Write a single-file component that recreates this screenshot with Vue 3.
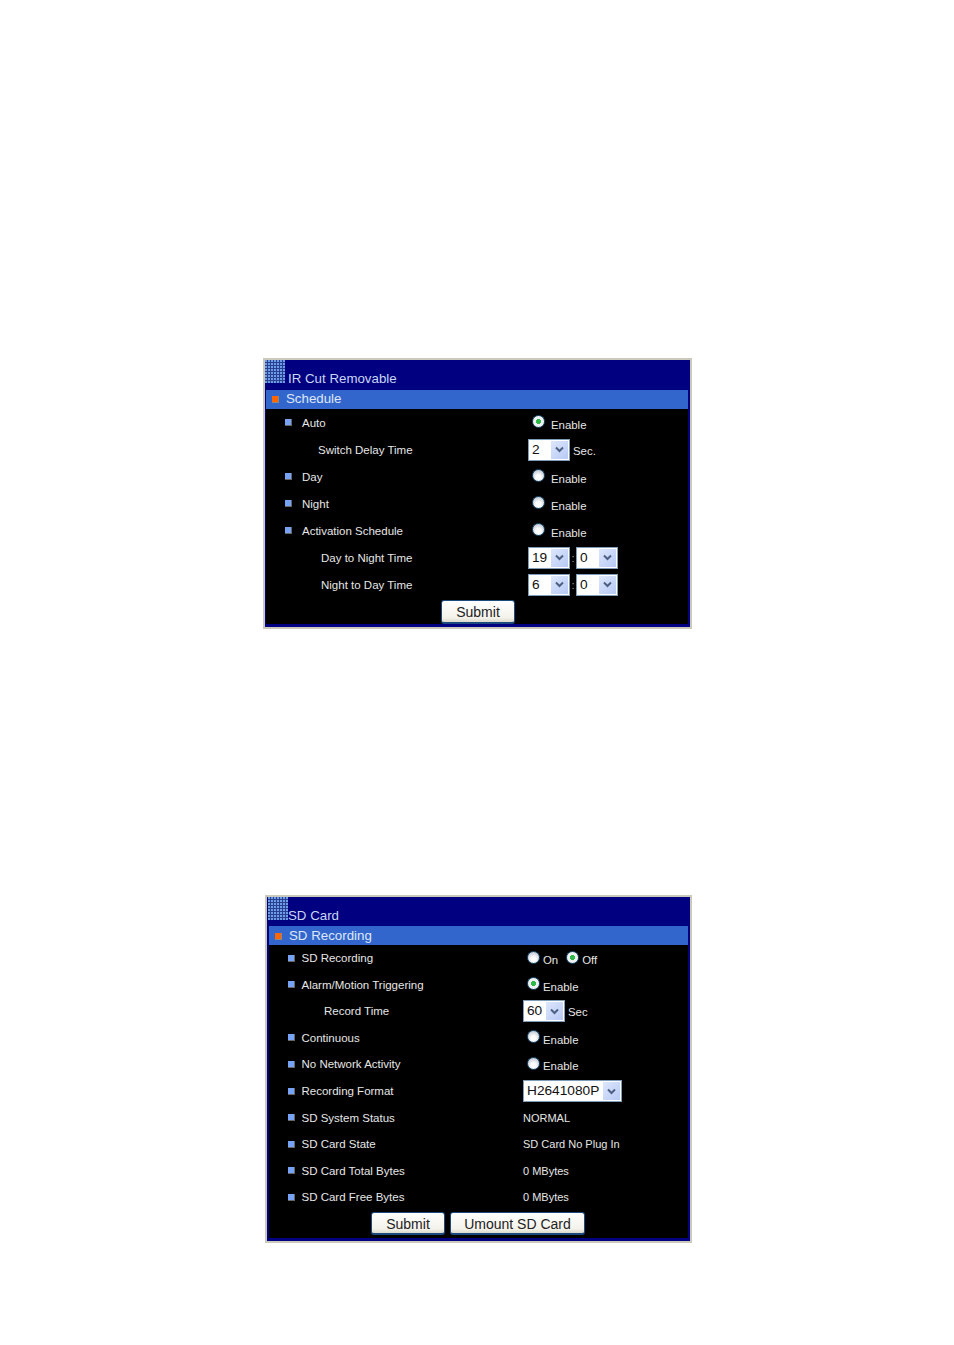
<script setup>
const panels = [
  {
    key: 'ir',
    title: 'IR Cut Removable',
    section: 'Schedule',
    buttons: [{ label: 'Submit', width: 74 }],
    rows: [
      { label: 'Auto', bullet: true, radios: [{ text: 'Enable', on: true }] },
      { label: 'Switch Delay Time', indent: 'sub-a', selects: [{ value: '2', width: 42 }], suffix: 'Sec.' },
      { label: 'Day', bullet: true, radios: [{ text: 'Enable' }] },
      { label: 'Night', bullet: true, radios: [{ text: 'Enable' }] },
      { label: 'Activation Schedule', bullet: true, radios: [{ text: 'Enable' }] },
      { label: 'Day to Night Time', indent: 'sub-b', selects: [{ value: '19', width: 42 }, { value: '0', width: 42 }] },
      { label: 'Night to Day Time', indent: 'sub-b', selects: [{ value: '6', width: 42 }, { value: '0', width: 42 }] }
    ]
  },
  {
    key: 'sd',
    title: 'SD Card',
    section: 'SD Recording',
    buttons: [{ label: 'Submit', width: 74 }, { label: 'Umount SD Card', width: 135 }],
    rows: [
      { label: 'SD Recording', bullet: true, radios: [{ text: 'On' }, { text: 'Off', on: true }] },
      { label: 'Alarm/Motion Triggering', bullet: true, radios: [{ text: 'Enable', on: true }] },
      { label: 'Record Time', indent: 'sub-c', selects: [{ value: '60', width: 42 }], suffix: 'Sec' },
      { label: 'Continuous', bullet: true, radios: [{ text: 'Enable' }] },
      { label: 'No Network Activity', bullet: true, radios: [{ text: 'Enable' }] },
      { label: 'Recording Format', bullet: true, selects: [{ value: 'H2641080P', width: 99 }] },
      { label: 'SD System Status', bullet: true, value: 'NORMAL' },
      { label: 'SD Card State', bullet: true, value: 'SD Card No Plug In' },
      { label: 'SD Card Total Bytes', bullet: true, value: '0 MBytes' },
      { label: 'SD Card Free Bytes', bullet: true, value: '0 MBytes' }
    ]
  }
]
</script>

<template>
  <div class="page">
    <div v-for="panel in panels" :key="panel.key" class="panel" :class="'panel-' + panel.key">
      <div class="title-bar">
        <span class="dots" />
        <span class="title">{{ panel.title }}</span>
      </div>
      <div class="section-bar">
        <span class="section-mark" />
        <span>{{ panel.section }}</span>
      </div>

      <div v-for="row in panel.rows" :key="row.label" class="row">
        <div class="label" :class="row.indent">
          <span v-if="row.bullet" class="bullet" />
          <span>{{ row.label }}</span>
        </div>
        <div class="control">
          <template v-if="row.radios">
            <label v-for="radio in row.radios" :key="radio.text" class="radio-item">
              <span class="radio" :class="{ on: radio.on }" />
              <span class="radio-text">{{ radio.text }}</span>
            </label>
          </template>
          <template v-if="row.selects">
            <template v-for="(sel, i) in row.selects" :key="i">
              <span v-if="i > 0" class="colon">:</span>
              <div class="select" :style="{ width: sel.width + 'px' }">
                <span class="select-value">{{ sel.value }}</span>
                <span class="select-arrow">
                  <svg width="9" height="7" viewBox="0 0 9 7">
                    <path d="M1 1.5 L4.5 5 L8 1.5" fill="none" stroke="#4d6185" stroke-width="2" />
                  </svg>
                </span>
              </div>
            </template>
          </template>
          <span v-if="row.suffix" class="suffix">{{ row.suffix }}</span>
          <span v-if="row.value" class="value">{{ row.value }}</span>
        </div>
      </div>

      <div class="actions">
        <button v-for="b in panel.buttons" :key="b.label" class="btn" type="button" :style="{ width: b.width + 'px' }">
          {{ b.label }}
        </button>
      </div>
    </div>
  </div>
</template>

<style>
html, body {
  background: #fff;
}
</style>

<style scoped>
.page {
  height: 1345px;
  box-sizing: border-box;
  padding-top: 360px;
  display: flex;
  flex-direction: column;
  gap: 270px;
  font-family: 'Liberation Sans', Arial, sans-serif;
}

.panel {
  box-sizing: border-box;
  background: #000;
  border: 3px solid #000080;
  border-top: 0;
  border-right-width: 2px;
  box-shadow: 0 0 0 2px #cbc8bc;
  --row-h: 27px;
  --col: 262px;
}

.panel-ir {
  margin-left: 265px;
  width: 425px;
  height: 267px;
  border-left-width: 1px;
}

.panel-sd {
  margin-left: 267px;
  width: 423px;
  height: 344px;
  border-left-width: 2px;
  --row-h: 26.55px;
  --col: 254px;
}

.title-bar {
  height: 30px;
  background: #000080;
  display: flex;
  align-items: flex-end;
}

.panel-sd .title-bar {
  height: 29px;
}

.dots {
  width: 20px;
  height: 23px;
  align-self: flex-start;
  margin-left: -1px;
  flex: none;
  background-color: #27408f;
  background-image: radial-gradient(circle at 1px 1px, #6f9be8 1px, transparent 1.2px);
  background-size: 3px 3px;
}

.title {
  font-size: 13.3px;
  line-height: 18px;
  margin-left: 3px;
  margin-bottom: 2px;
  color: #c9d6f2;
}

.panel-sd .title {
  margin-left: 0;
  margin-bottom: 1px;
}

.section-bar {
  box-sizing: border-box;
  height: 19px;
  padding: 0 0 2px 6px;
  background: #3366cc;
  color: #dfe7f8;
  font-size: 13.3px;
  display: flex;
  align-items: center;
}

.panel-sd .section-bar {
  padding-bottom: 1px;
}

.section-mark {
  box-sizing: border-box;
  width: 7px;
  height: 7px;
  margin-top: 2px;
  margin-right: 7px;
  background: #ff6600;
  border-right: 1px solid #8f8a80;
  border-bottom: 1px solid #8f8a80;
  flex: none;
}

.row {
  height: var(--row-h);
  display: grid;
  grid-template-columns: var(--col) 1fr;
  align-items: center;
}

.label {
  display: flex;
  align-items: center;
  font-size: 11.5px;
  color: #e6e6e6;
  padding-left: 19px;
}

.bullet {
  width: 7px;
  height: 7px;
  margin-right: 10px;
  background: #77a3f7;
  border-right: 1px solid #666;
  border-bottom: 1px solid #666;
  box-sizing: border-box;
  flex: none;
}

.panel-sd .bullet {
  margin-right: 6.5px;
}

.sub-a {
  padding-left: 52px;
}

.sub-b {
  padding-left: 55px;
}

.panel-sd .sub-c {
  padding-left: 55px;
}

.control {
  display: flex;
  align-items: center;
  font-size: 11.4px;
  color: #e6e6e6;
}

.value {
  font-size: 11px;
}

.radio-item {
  display: flex;
  align-items: center;
  margin-left: 4px;
  margin-right: 2px;
}

.radio {
  width: 13px;
  height: 13px;
  border-radius: 50%;
  background: radial-gradient(circle at 50% 65%, #fff 25%, #b9c2ce 85%);
  border: 1px solid #1d4f70;
  box-sizing: border-box;
  position: relative;
  top: -1px;
  flex: none;
}

.radio.on {
  background: radial-gradient(circle, #2db84a 0 2.4px, #eef0f1 2.8px);
}

.radio-text {
  margin-left: 6px;
  position: relative;
  top: 2px;
}

.panel-sd .radio-text {
  margin-left: 3px;
  margin-right: 2px;
}

.select {
  box-sizing: border-box;
  height: 22px;
  background: #fff;
  border: 1px solid #7f9db9;
  display: flex;
  align-items: stretch;
  padding: 1px;
  color: #111;
}

.select-value {
  flex: 1;
  font-size: 13.7px;
  line-height: 18px;
  padding-left: 2px;
}

.select-arrow {
  width: 17px;
  background: linear-gradient(135deg, #dde6fb, #b7c9f5);
  display: flex;
  align-items: center;
  justify-content: center;
  flex: none;
}

.colon {
  width: 6px;
  text-align: center;
  color: #999;
}

.suffix {
  margin-left: 3px;
  position: relative;
  top: 1px;
}

.actions {
  margin-top: 2px;
  display: flex;
  justify-content: center;
  gap: 5px;
}

.panel-ir .actions {
  padding-left: 2px;
}

.panel-sd .actions {
  padding-right: 1px;
}

.btn {
  box-sizing: border-box;
  height: 24px;
  padding: 0;
  font-family: inherit;
  font-size: 14px;
  color: #222;
  background: linear-gradient(#ffffff, #f3f2ea 80%, #dcd9cc);
  border: 1px solid #1c4a7e;
  border-bottom-width: 2px;
  border-radius: 3px;
}

.panel-sd .btn {
  height: 23px;
  padding-top: 1px;
}
</style>
